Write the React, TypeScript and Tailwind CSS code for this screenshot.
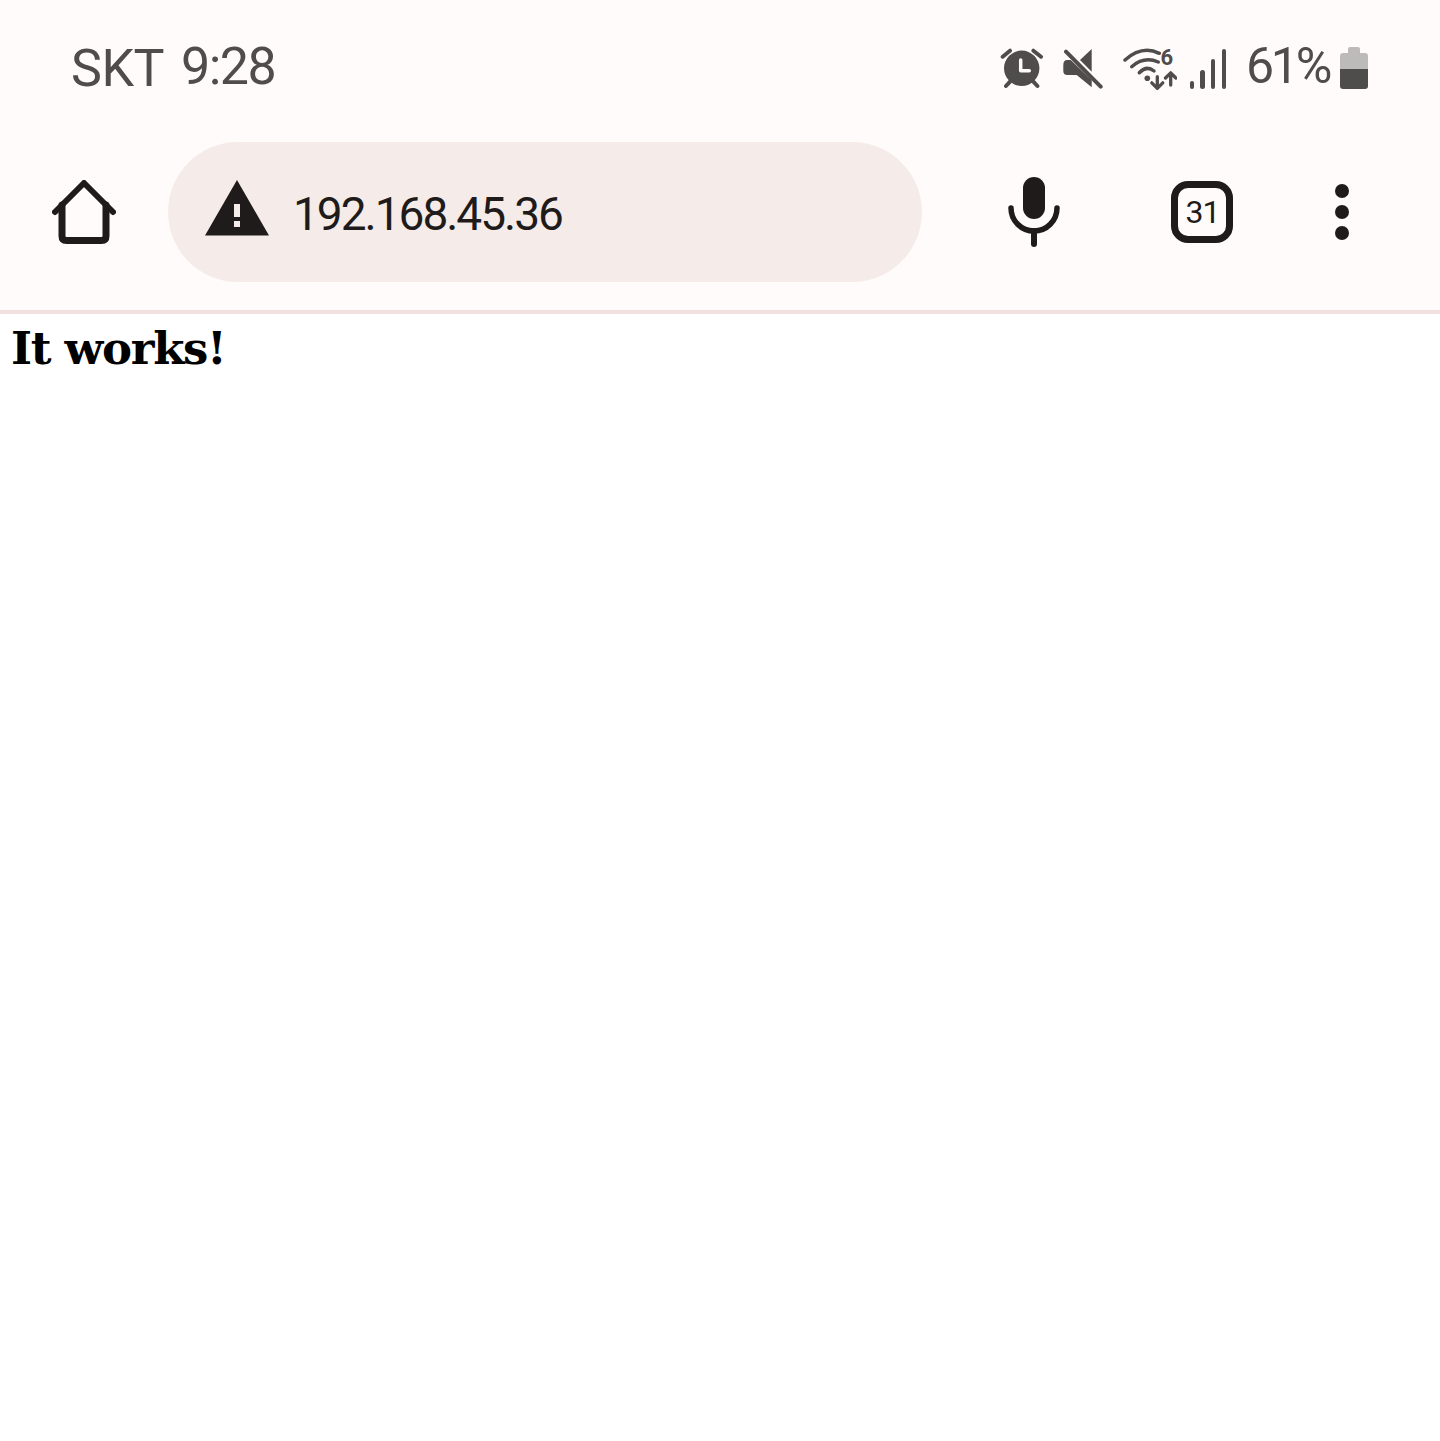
import React from 'react';

const statusColor = '#4f4d4b';
const inkColor = '#1f1b1a';

function AlarmIcon() {
  return (
    <svg width="44" height="42" viewBox="0 0 44 42" fill="none">
      <circle cx="21.700" cy="21.300" r="17.700" fill={statusColor} />
      <path d="M20.700 13v10.700h8.600" stroke="#fffbfa" strokeWidth="3.500" strokeLinecap="round" strokeLinejoin="round" />
      <path d="M2.700 9.700 10 3.700M41 9.700 33.400 3.700M6 39l4-4.300M37.400 39l-4-4.300" stroke={statusColor} strokeWidth="4" strokeLinecap="round" />
    </svg>
  );
}

function MuteIcon() {
  return (
    <svg width="42" height="42" viewBox="0 0 42 42" fill="none">
      <path d="M18 13 29.700 2V24.700Z" fill={statusColor} />
      <path d="M1.300 18Q1.300 13 5.300 13H8.700L29.700 33V40.300L14.700 28H5.300Q1.300 28 1.300 23.700Z" fill={statusColor} />
      <path d="M4 4.700 38.700 39.700" stroke={statusColor} strokeWidth="4" strokeLinecap="round" />
    </svg>
  );
}

function WifiIcon() {
  return (
    <div className="relative h-[44px] w-[55px]">
      <svg className="absolute left-0 top-0" width="55" height="44" viewBox="0 0 55 44" fill="none">
        <path d="M3 13Q20 -2 37.300 6.300" stroke={statusColor} strokeWidth="3.500" strokeLinecap="round" />
        <path d="M9.700 19.700Q22 9 36.300 15" stroke={statusColor} strokeWidth="3.500" strokeLinecap="round" />
        <path d="M17.300 25.700Q24.600 18 32 24" stroke={statusColor} strokeWidth="3.500" strokeLinecap="round" />
        <circle cx="25.300" cy="31.300" r="2.800" fill={statusColor} />
        <path d="M35.300 29.700V41M29.800 35.800 35.300 41.300 40.800 35.800" stroke={statusColor} strokeWidth="3.300" strokeLinecap="round" strokeLinejoin="round" />
        <path d="M48.700 38V26M43.500 31 48.700 25.800 53.900 31" stroke={statusColor} strokeWidth="3.300" strokeLinecap="round" strokeLinejoin="round" />
      </svg>
      <span className="absolute left-[39px] top-[-2px] font-['Roboto',sans-serif] text-[22px] font-bold leading-[26px] text-[#4f4d4b]">6</span>
    </div>
  );
}

function SignalIcon() {
  return (
    <div className="flex h-[40px] items-end gap-[6.200px]">
      <div className="h-[8px] w-[4.500px] rounded-full bg-[#4f4d4b]" />
      <div className="h-[19px] w-[4.500px] rounded-full bg-[#4f4d4b]" />
      <div className="h-[30px] w-[4.500px] rounded-full bg-[#4f4d4b]" />
      <div className="h-[40px] w-[4.500px] rounded-full bg-[#4f4d4b]" />
    </div>
  );
}

function BatteryIcon() {
  return (
    <svg width="28" height="42" viewBox="0 0 28 42" fill="none">
      <path d="M8 6V2Q8 0 10 0H18Q20 0 20 2V6H25Q28 6 28 9V22H0V9Q0 6 3 6Z" fill="#bdbbb9" />
      <path d="M0 22H28V39Q28 42 25 42H3Q0 42 0 39Z" fill={statusColor} />
    </svg>
  );
}

function HomeIcon() {
  return (
    <svg width="64" height="64" viewBox="0 0 64 64" fill="none" stroke={inkColor} strokeLinecap="round" strokeLinejoin="round">
      <path d="M3 32 32 3 61 32" strokeWidth="6" />
      <path d="M10 25V56Q10 60.500 14.500 60.500H49.500Q54 60.500 54 56V25" strokeWidth="7" />
    </svg>
  );
}

function WarningIcon() {
  return (
    <svg width="64" height="56" viewBox="0 0 64 56" className="relative top-[-4px] shrink-0">
      <path d="M32 0 64 55.500H0Z" fill={inkColor} />
      <rect x="29" y="24" width="6" height="13" fill="#f5ecea" />
      <rect x="29" y="41" width="6" height="6" fill="#f5ecea" />
    </svg>
  );
}

function MicIcon() {
  return (
    <svg width="52" height="70" viewBox="0 0 52 70" fill="none">
      <rect x="15" y="0" width="22" height="42" rx="11" fill={inkColor} />
      <path d="M3 31A23 23 0 0 0 49 31" stroke={inkColor} strokeWidth="5.500" strokeLinecap="round" />
      <path d="M26 54V67" stroke={inkColor} strokeWidth="6" strokeLinecap="round" />
    </svg>
  );
}

function MoreDots() {
  return (
    <div className="flex flex-col gap-[7px]">
      <div className="size-[14px] rounded-full bg-[#1f1b1a]" />
      <div className="size-[14px] rounded-full bg-[#1f1b1a]" />
      <div className="size-[14px] rounded-full bg-[#1f1b1a]" />
    </div>
  );
}

export default function App() {
  return (
    <div className="min-h-screen bg-white">
      <header className="bg-[#fffbfa]">
        <div className="flex h-[132px] items-start justify-between pl-[71px] pr-[72px] pt-[47px] font-['Roboto',sans-serif] text-[#4f4d4b]">
          <div className="mt-[2px] flex items-baseline gap-[17px] text-[52px] leading-[40px]">
            <span className="tracking-[-0.500px]">SKT</span>
            <span className="relative top-[-2px] tracking-[-1.500px]">9:28</span>
          </div>
          <div className="flex items-start">
            <AlarmIcon />
            <div className="ml-[18px]"><MuteIcon /></div>
            <div className="ml-[18px]"><WifiIcon /></div>
            <div className="ml-[13px] mt-[2px]"><SignalIcon /></div>
            <span className="relative top-[-1px] ml-[20px] text-[50px] leading-[40px] tracking-[-3.300px]">61%</span>
            <div className="ml-[11px]"><BatteryIcon /></div>
          </div>
        </div>
        <div className="flex h-[178px] items-start pl-[52px] pt-[10px]">
          <div className="mt-[38px]"><HomeIcon /></div>
          <div className="ml-[52px] flex h-[140px] w-[754px] items-center rounded-full bg-[#f5ecea] pl-[37px]">
            <WarningIcon />
            <span className="relative top-[2px] ml-[24px] font-['Roboto',sans-serif] text-[46px] tracking-[-2px] text-[#1f1b1a]">192.168.45.36</span>
          </div>
          <div className="ml-[86px] mt-[35px]"><MicIcon /></div>
          <div className="ml-[111px] mt-[39px] flex size-[62px] items-center justify-center rounded-[17px] border-[7px] border-[#1f1b1a] pb-[1px] pl-[1px] font-['Roboto',sans-serif] text-[32px] tracking-[-1px] text-[#1f1b1a]">31</div>
          <div className="ml-[102px] mt-[42px]"><MoreDots /></div>
        </div>
        <div className="h-[4px] bg-[#f2e0df]" />
      </header>
      <h1 className="pl-[11px] pt-[5px] font-['DejaVu_Serif',serif] text-[45px] font-bold leading-[60px] tracking-[-1.300px] text-black">It works!</h1>
    </div>
  );
}
